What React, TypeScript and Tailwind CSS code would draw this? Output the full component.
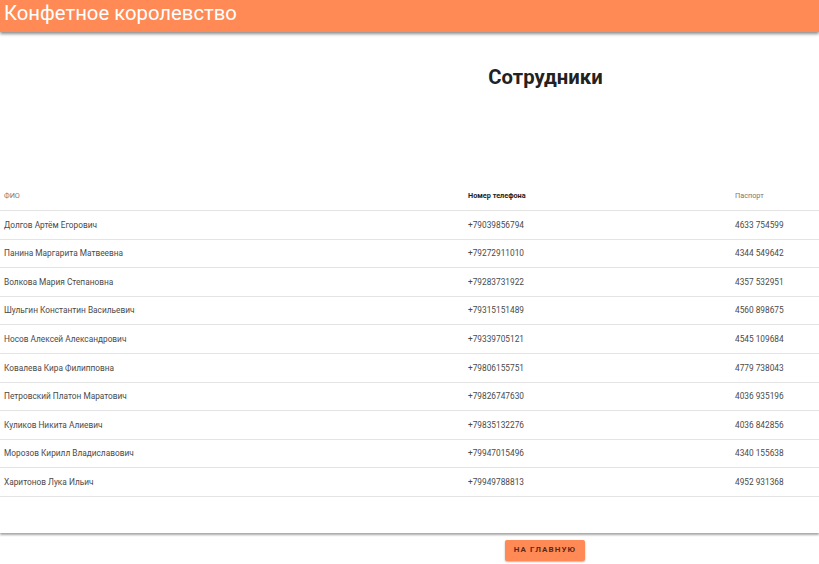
import React from 'react';

const employees = [
  { name: 'Долгов Артём Егорович', phone: '+79039856794', passport: '4633 754599' },
  { name: 'Панина Маргарита Матвеевна', phone: '+79272911010', passport: '4344 549642' },
  { name: 'Волкова Мария Степановна', phone: '+79283731922', passport: '4357 532951' },
  { name: 'Шульгин Константин Васильевич', phone: '+79315151489', passport: '4560 898675' },
  { name: 'Носов Алексей Александрович', phone: '+79339705121', passport: '4545 109684' },
  { name: 'Ковалева Кира Филипповна', phone: '+79806155751', passport: '4779 738043' },
  { name: 'Петровский Платон Маратович', phone: '+79826747630', passport: '4036 935196' },
  { name: 'Куликов Никита Алиевич', phone: '+79835132276', passport: '4036 842856' },
  { name: 'Морозов Кирилл Владиславович', phone: '+79947015496', passport: '4340 155638' },
  { name: 'Харитонов Лука Ильич', phone: '+79949788813', passport: '4952 931368' },
];

const App: React.FC = () => {
  return (
    <div className="h-[564px] overflow-hidden bg-white font-['Roboto',sans-serif]">
      <header className="h-[32px] bg-[#ff8a56] shadow-[0_2px_3px_rgba(0,0,0,0.45)] relative z-10">
        <h1 className="pl-[4px] text-[20.3px] leading-[26px] text-white">Конфетное королевство</h1>
      </header>

      <div className="shadow-[0_2px_2px_rgba(0,0,0,0.35)] pb-[36px]">
        <div className="flex justify-center pl-[272px] pt-[33px] h-[151px]">
          <h2 className="text-[20.3px] font-bold text-[#222] leading-[24px]">Сотрудники</h2>
        </div>

        <div className="grid grid-cols-[464px_267px_1fr] h-[28px] items-center border-b border-[#e3e3e3] text-[7.3px]">
          <span className="pl-[4px] text-[#777]">ФИО</span>
          <span className="pl-[4px] font-bold text-[#222]">Номер телефона</span>
          <span className="pl-[4px] text-[#777]">Паспорт</span>
        </div>

        {employees.map((e) => (
          <div
            key={e.passport}
            className="grid grid-cols-[464px_267px_1fr] h-[28.6px] items-center border-b border-[#e3e3e3] text-[8.3px] text-[#4a4a4a]"
          >
            <span className="pl-[4px]">{e.name}</span>
            <span className="pl-[4px]">{e.phone}</span>
            <span className="pl-[4px]">{e.passport}</span>
          </div>
        ))}
      </div>

      <div className="flex justify-center pl-[271px] pt-[7px]">
        <button className="h-[21px] w-[80px] rounded-[2px] bg-[#ff8a56] text-[8px] font-bold tracking-[1.1px] text-[#5a2a18] shadow-[0_1px_2px_rgba(0,0,0,0.3)]">
          НА ГЛАВНУЮ
        </button>
      </div>
    </div>
  );
};

export default App;
